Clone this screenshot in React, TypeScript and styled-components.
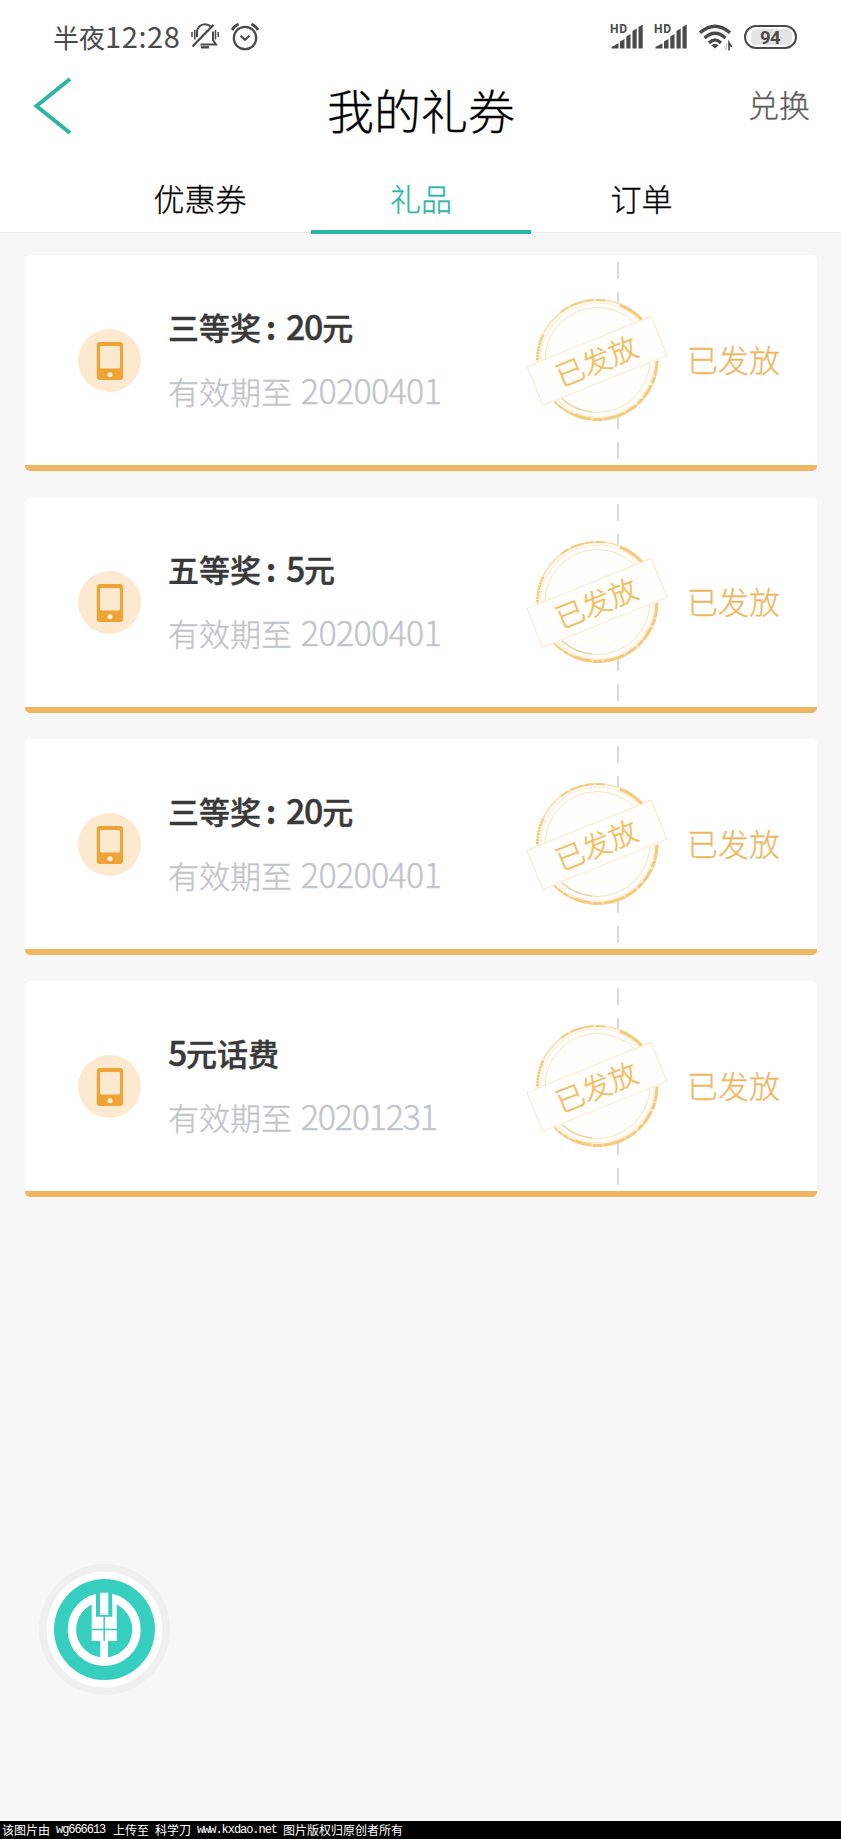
import React from 'react';
import styled, { createGlobalStyle } from 'styled-components';

const TEAL = '#2bb5a4';
const ORANGE = '#efb662';

const GlobalStyle = createGlobalStyle`
  * { box-sizing: border-box; }
  body { margin: 0; background: #f7f7f7; }
`;

const Page = styled.div`
  width: 841px;
  height: 1839px;
  display: flex;
  flex-direction: column;
  background: #f7f7f7;
  overflow: hidden;
  font-family: 'Noto Sans CJK SC', sans-serif;
  font-weight: 300;
  white-space: nowrap;
`;

const Header = styled.header`
  height: 233px;
  flex: none;
  background: #fff;
  border-bottom: 1px solid #ebebeb;
  -webkit-text-stroke: 0.3px currentColor;
`;

const StatusBar = styled.div`
  height: 72px;
  padding: 2px 44px 0 53px;
  display: flex;
  align-items: center;
  justify-content: space-between;
  color: #4a4a4a;
  -webkit-text-stroke: 0;
`;

const StatusGroup = styled.div<{ $gap: number }>`
  display: flex;
  align-items: center;
  gap: ${(p) => p.$gap}px;
`;

const Clock = styled.span`
  width: 126px;
  font-size: 26px;
  line-height: 40px;
  font-weight: 400;
`;

const Digits = styled.span<{ $spacing: number; $size?: number }>`
  letter-spacing: ${(p) => p.$spacing}px;
  line-height: 1;
  ${(p) => p.$size && `font-size: ${p.$size}px;`}
`;

const TitleBar = styled.div`
  height: 88px;
  padding: 0 31px 0 34px;
  display: grid;
  grid-template-columns: 1fr auto 1fr;
  align-items: start;
`;

const BackButton = styled.button`
  width: 40px;
  height: 62px;
  margin-top: 3px;
  padding: 0;
  border: 0;
  background: none;
`;

const Title = styled.h1`
  margin: 7px 2px 0 0;
  font-size: 47px;
  line-height: 60px;
  font-weight: 300;
  color: #000;
`;

const Exchange = styled.span`
  justify-self: end;
  margin: 12px 0 0 0;
  font-size: 31px;
  line-height: 40px;
  color: #5c5c5c;
`;

const Tabs = styled.nav`
  height: 74px;
  padding: 0 90px 0 91px;
  display: grid;
  grid-template-columns: 220px 220px 220px;
`;

const Tab = styled.div<{ $active?: boolean; $shift?: number }>`
  height: 74px;
  padding-top: 18px;
  padding-left: ${(p) => Math.max(p.$shift ?? 0, 0)}px;
  padding-right: ${(p) => Math.max(-(p.$shift ?? 0), 0)}px;
  text-align: center;
  font-size: 31px;
  line-height: 40px;
  color: ${(p) => (p.$active ? TEAL : '#000')};
  border-bottom: 4px solid ${(p) => (p.$active ? TEAL : 'transparent')};
`;

const List = styled.main`
  flex: 1;
  padding: 22px 24px 0 25px;
  display: flex;
  flex-direction: column;
  gap: 26px;
`;

const Card = styled.article`
  position: relative;
  height: 216px;
  flex: none;
  display: flex;
  background: #fff;
  border-radius: 5px;
  overflow: hidden;
  border-bottom: 6px solid ${ORANGE};
`;

const CardIcon = styled.div`
  width: 63px;
  height: 63px;
  margin: 74px 27px 0 53px;
`;

const Info = styled.div`
  flex: 1;
  padding-top: 52px;
`;

const Prize = styled.h2`
  height: 40px;
  margin: 0;
  font-size: 31px;
  line-height: 40px;
  font-weight: 500;
  color: #393939;
  -webkit-text-stroke: 0.4px currentColor;
`;

const Validity = styled.p`
  height: 40px;
  margin: 24px 0 0;
  font-size: 31px;
  line-height: 40px;
  word-spacing: 2px;
  color: #bfc5cd;
  -webkit-text-stroke: 0.4px currentColor;
`;

const Divider = styled.div`
  width: 2px;
  height: 197px;
  margin-top: 7px;
  background: repeating-linear-gradient(#d9d9dd 0 17px, transparent 17px 30px);
`;

const Status = styled.div`
  width: 198px;
  padding: 84px 0 0 68px;
  font-size: 31px;
  line-height: 40px;
  color: ${ORANGE};
  -webkit-text-stroke: 0.3px currentColor;
`;

const StampBox = styled.div`
  position: absolute;
  left: 498px;
  top: 35px;
  width: 150px;
  height: 140px;
`;

const FloatButton = styled.div`
  position: absolute;
  left: 39px;
  top: 1564px;
  width: 131px;
  height: 131px;
`;

const Footer = styled.footer`
  height: 18px;
  flex: none;
  padding-left: 2px;
  display: flex;
  background: #000;
  color: #fff;
  font-size: 12px;
  line-height: 17px;
  font-weight: 400;
`;

const Word = styled.span<{ $width: number; $latin?: boolean }>`
  width: ${(p) => p.$width}px;
  ${(p) => p.$latin && `font-family: 'Liberation Mono', monospace; font-size: 12px; letter-spacing: -1.05px; line-height: 19px;`}
`;

const Svg = styled.svg`
  display: block;
  overflow: visible;
`;

const MutedBell = () => (
  <Svg width="28" height="28" viewBox="0 0 28 28" fill="none" stroke="#4a4a4a" strokeWidth="2">
    <path d="M6 14V9.500C6 4.500 9.500 1.200 14 1.200c2.300 0 4.300 0.800 5.800 2.300M22 8.500V17l3 4.500H9.500" />
    <path d="M1.500 23.500L22.500 1.800" strokeWidth="2.300" />
    <path d="M10 24.300h8" strokeWidth="2.400" />
    <path d="M1 9v5M3.800 7v9.500M24.500 7v9.500M27.200 9v5" strokeWidth="1.500" />
  </Svg>
);

const AlarmClock = () => (
  <Svg width="28" height="28" viewBox="0 0 28 28" fill="none" stroke="#4a4a4a" strokeWidth="2.200">
    <circle cx="14" cy="15" r="11.200" />
    <path d="M9.500 12.800l4.500 4 4.500-4" />
    <path d="M1 7Q3 3.300 7.500 1M20.500 1Q25 3.300 27 7" strokeWidth="2.800" />
  </Svg>
);

const Signal = () => (
  <Svg width="33" height="26" viewBox="0 0 33 26" fill="#4a4a4a">
    <text x="-1" y="9" fontFamily="Roboto, sans-serif" fontWeight="700" fontSize="12" letterSpacing="0.800">HD</text>
    <path d="M0.500 24.500v-1.500l7-3.800v5.300zM9 17.500l4.500-2.500v9.500H9zM15.300 12.500l4.200-2.400v14.400h-4.200zM21.500 7l4.200-2.400v19.900h-4.200zM27.500 3l4.200-2.400v23.900h-4.200z" />
  </Svg>
);

const Wifi = () => (
  <Svg width="34" height="26" viewBox="0 0 34 26" fill="none" stroke="#4a4a4a" strokeWidth="3.400">
    <path d="M1 8.800Q16-4.500 31 8.800M5.500 14Q16 4.500 26.500 14M10 19Q16 12.800 22 19" />
    <path d="M12.300 21.300Q16 18 19.700 21.300L16 24.600z" fill="#4a4a4a" stroke="none" />
    <path d="M30 26.500v-8l2.500 4.500" strokeWidth="1.600" />
    <path d="M27.500 19v7l-2-2.500" strokeWidth="1" stroke="#d0d0d0" />
  </Svg>
);

const Battery = () => (
  <Svg width="53" height="24" viewBox="0 0 53 24">
    <rect x="1" y="1" width="51" height="22" rx="11" fill="#fff" stroke="#4a4a4a" strokeWidth="2" />
    <rect x="7" y="4" width="41" height="16" rx="5" fill="#e4e4e4" />
    <text x="26" y="18.500" textAnchor="middle" fontFamily="Roboto, sans-serif" fontWeight="700" fontSize="18.500" letterSpacing="-0.500" fill="#4a4a4a">94</text>
  </Svg>
);

const PhoneIcon = () => (
  <Svg width="63" height="63" viewBox="0 0 63 63">
    <circle cx="31.500" cy="31.500" r="31.500" fill="#fde9d0" />
    <rect x="18.800" y="13" width="26.200" height="38" rx="3" fill="#f0a335" />
    <rect x="22" y="17" width="20" height="22.500" rx="1.500" fill="#fde9d0" />
    <circle cx="32" cy="45.800" r="2.500" fill="#fff3e0" />
  </Svg>
);

const Stamp = () => (
  <Svg width="150" height="140" viewBox="0 0 150 140" fill="none">
    <circle cx="74.500" cy="70" r="61" fill="#fffefd" />
    <circle cx="74.500" cy="70" r="60" stroke="#f9deb0" strokeWidth="1.600" />
    <circle cx="74.500" cy="70" r="57" stroke="#fcf0da" strokeWidth="1.500" />
    <circle cx="74.500" cy="70" r="52.500" stroke="#f8e2bc" strokeWidth="1" />
    <g stroke="#f4ca7c" strokeWidth="3">
      <path d="M14.500 70A60 60 0 0 1 20 45" strokeDasharray="2 1" />
      <path d="M38 22A60 60 0 0 1 82 10.500" strokeDasharray="9 2 14 1" strokeWidth="2" />
      <path d="M97 15A60 60 0 0 1 120 31" />
      <path d="M134 71A60 60 0 0 1 111 117" strokeDasharray="15 1 7 2" />
      <path d="M111 117A60 60 0 0 1 52 125" strokeDasharray="10 1 22 1" />
      <path d="M52 125A60 60 0 0 1 32 112" strokeDasharray="6 1" strokeWidth="2" />
    </g>
    <path d="M39 109A52.500 52.500 0 0 0 69 122" stroke="#ecd1a1" strokeWidth="1.400" />
    <g transform="rotate(-22 74.500 69.500)">
      <rect x="6.500" y="49.500" width="134" height="42" fill="#fffefd" stroke="#fae8cc" strokeWidth="1" />
      <text x="73" y="81.500" textAnchor="middle" fontSize="28.500" fontWeight="300" fill="#f2bd5e" stroke="#f2bd5e" strokeWidth="0.500">已发放</text>
    </g>
  </Svg>
);

const BankLogo = () => (
  <Svg width="131" height="131" viewBox="0 0 131 131">
    <circle cx="65.500" cy="65.500" r="65.500" fill="#efefef" />
    <circle cx="65.500" cy="65.500" r="58" fill="#fff" />
    <circle cx="65.500" cy="65.500" r="50.500" fill="#36cfbf" />
    <circle cx="65.200" cy="65.500" r="32.300" fill="none" stroke="#fff" strokeWidth="8.500" />
    <path d="M57 26h16.300v20H57z" fill="#36cfbf" />
    <path d="M52.700 31.500L57 30v22.700h16.300V30l4.400 1.500V77H69v22h-7.700V77h-8.600z" fill="#fff" />
    <path d="M61 28.700h8.300V51H61z" fill="#fff" />
    <path d="M65.200 51v26M52.500 65.500h25.500" stroke="#36cfbf" strokeWidth="1.500" />
  </Svg>
);

interface PrizeEntry {
  label: React.ReactNode;
  date: string;
  spacing: number;
}

const ColonBox = styled.span`
  display: inline-block;
  width: 25px;
  padding-right: 5px;
  text-align: center;
  font-weight: 700;
`;

const Colon = () => <ColonBox>:</ColonBox>;

const Amount = ({ children }: { children: React.ReactNode }) => (
  <Digits $spacing={-1.3} $size={34}>{children}</Digits>
);

const prizes: PrizeEntry[] = [
  { label: <>三等奖<Colon /><Amount>20</Amount>元</>, date: '20200401', spacing: -0.65 },
  { label: <>五等奖<Colon /><Amount>5</Amount>元</>, date: '20200401', spacing: -0.65 },
  { label: <>三等奖<Colon /><Amount>20</Amount>元</>, date: '20200401', spacing: -0.65 },
  { label: <><Amount>5</Amount>元话费</>, date: '20201231', spacing: -1.2 },
];

export default function App() {
  return (
    <Page>
      <GlobalStyle />
      <Header>
        <StatusBar>
          <StatusGroup $gap={12}>
            <Clock>半夜<Digits $spacing={0.6} $size={29}>12:28</Digits></Clock>
            <MutedBell />
            <AlarmClock />
          </StatusGroup>
          <StatusGroup $gap={11}>
            <Signal />
            <Signal />
            <Wifi />
            <Battery />
          </StatusGroup>
        </StatusBar>
        <TitleBar>
          <BackButton aria-label="返回">
            <Svg width="40" height="62" viewBox="0 0 40 62" fill="none" stroke={TEAL} strokeWidth="4">
              <path d="M36 4L2.500 31L36 58" />
            </Svg>
          </BackButton>
          <Title>我的礼券</Title>
          <Exchange>兑换</Exchange>
        </TitleBar>
        <Tabs>
          <Tab $shift={-2}>优惠券</Tab>
          <Tab $active>礼品</Tab>
          <Tab $shift={1}>订单</Tab>
        </Tabs>
      </Header>
      <List>
        {prizes.map((p, i) => (
          <Card key={i}>
            <CardIcon><PhoneIcon /></CardIcon>
            <Info>
              <Prize>{p.label}</Prize>
              <Validity>有效期至 <Digits $spacing={p.spacing} $size={34}>{p.date}</Digits></Validity>
            </Info>
            <Divider />
            <Status>已发放</Status>
            <StampBox><Stamp /></StampBox>
          </Card>
        ))}
      </List>
      <FloatButton><BankLogo /></FloatButton>
      <Footer>
        <Word $width={54}>该图片由</Word>
        <Word $width={57} $latin>wg666613</Word>
        <Word $width={42}>上传至</Word>
        <Word $width={42}>科学刀</Word>
        <Word $width={86} $latin>www.kxdao.net</Word>
        <Word $width={120}>图片版权归原创者所有</Word>
      </Footer>
    </Page>
  );
}
